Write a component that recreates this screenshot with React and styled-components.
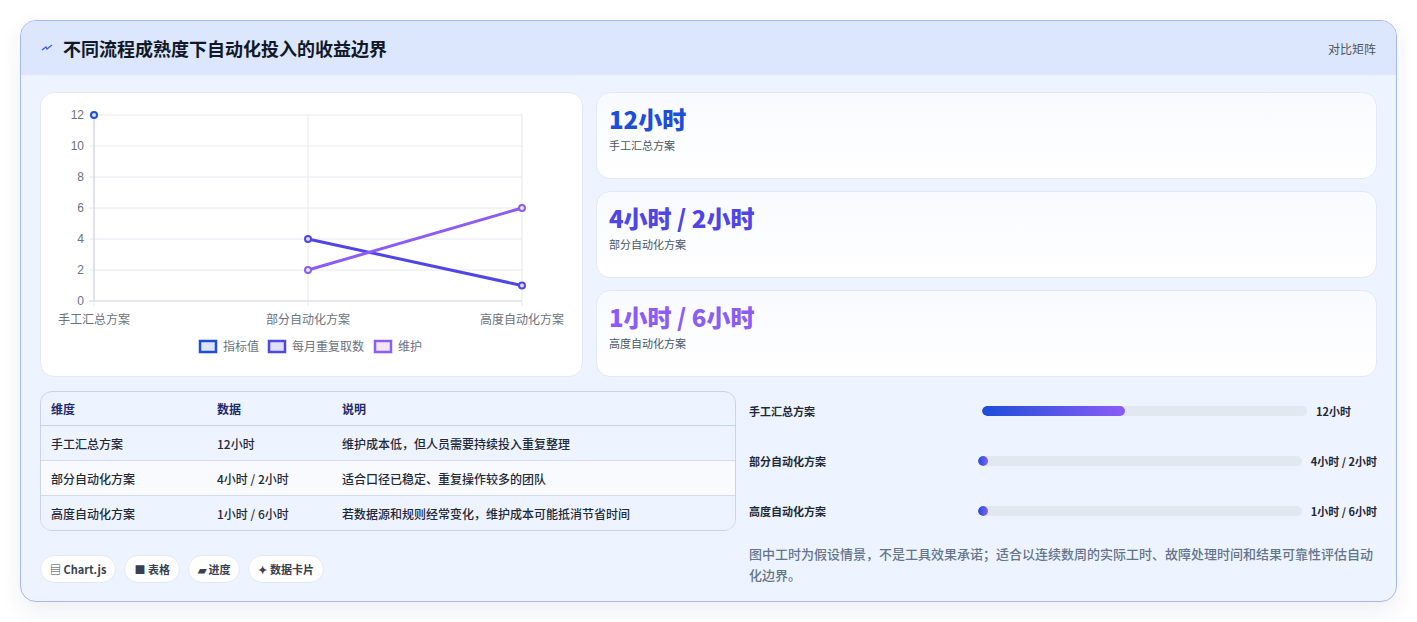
import React from 'react';
import styled, { createGlobalStyle } from 'styled-components';

const Global = createGlobalStyle`
  body { margin: 0; background: #fff; font-family: "Noto Sans CJK SC", "Noto Sans", sans-serif; }
`;

const Page = styled.div`
  padding: 20px;
  width: 1377px;
`;

const Card = styled.div`
  border: 1px solid #a9b8ea;
  border-radius: 16px;
  background: #eef4ff;
  overflow: hidden;
  box-shadow: 0 8px 22px rgba(30, 41, 99, 0.08);
`;

const Header = styled.div`
  height: 54px;
  background: #dce7fe;
  display: flex;
  align-items: center;
  justify-content: space-between;
  padding: 0 20px;
`;

const Title = styled.h2`
  margin: 0;
  font-size: 18px;
  font-weight: 700;
  color: #111827;
  display: flex;
  align-items: center;
  gap: 10px;
`;

const Tag = styled.span`
  font-size: 12px;
  color: #4b5563;
`;

const Body = styled.div`
  padding: 17px 19px 16px 19px;
  display: flex;
  flex-direction: column;
  gap: 14px;
`;

const TopRow = styled.div`
  display: grid;
  grid-template-columns: 543px 1fr;
  gap: 13px;
`;

const ChartBox = styled.div`
  background: #fff;
  border: 1px solid #e2e8f5;
  border-radius: 14px;
  height: 283px;
`;

const Stats = styled.div`
  display: flex;
  flex-direction: column;
  gap: 12px;
`;

const Stat = styled.div`
  height: 87px;
  box-sizing: border-box;
  border: 1px solid #e2e8f5;
  border-radius: 14px;
  background: linear-gradient(180deg, #f8faff 0%, #ffffff 100%);
  padding: 10px 12px;
`;

const StatValue = styled.div`
  font-size: 24px;
  font-weight: 800;
  color: ${p => p.$c};
  line-height: 32px;
`;

const StatLabel = styled.div`
  font-size: 11px;
  color: #4b5563;
  margin-top: 2px;
`;

const BottomRow = styled.div`
  display: grid;
  grid-template-columns: 696px 1fr;
  gap: 13px;
`;

const Left = styled.div`
  display: flex;
  flex-direction: column;
  gap: 24px;
`;

const Table = styled.table`
  width: 100%;
  border-collapse: separate;
  border-spacing: 0;
  border: 1px solid #c9d3ea;
  border-radius: 12px;
  overflow: hidden;
  font-size: 12px;
  background: #eef4ff;
`;

const Th = styled.th`
  text-align: left;
  font-weight: 700;
  color: #1e2a6b;
  height: 33px;
  padding: 0 10px;
  border-bottom: 1px solid #c9d3ea;
  width: ${p => p.$w || 'auto'};
`;

const Tr = styled.tr`
  background: ${p => (p.$alt ? '#f8fafd' : '#eef4ff')};
`;

const Td = styled.td`
  height: 34px;
  padding: 0 10px;
  color: #1f2937;
  font-weight: 500;
  border-bottom: ${p => (p.$last ? 'none' : '1px solid #d3dcef')};
`;

const Pills = styled.div`
  display: flex;
  gap: 8px;
`;

const Pill = styled.span`
  background: #fff;
  border: 1px solid #e2e8f5;
  border-radius: 14px;
  padding: 5px 9px;
  font-size: 11px;
  font-weight: 600;
  color: #374151;
  display: flex;
  align-items: center;
  gap: 4px;
`;

const Right = styled.div`
  display: flex;
  flex-direction: column;
  gap: 30px;
  padding-top: 10px;
`;

const BarRow = styled.div`
  display: grid;
  grid-template-columns: 220px 1fr auto;
  align-items: center;
  gap: 9px;
  height: 20px;
  font-size: 11px;
  font-weight: 700;
  color: #1f2937;
`;

const Track = styled.div`
  height: 10px;
  border-radius: 5px;
  background: #e2e8f0;
  overflow: hidden;
`;

const Fill = styled.div`
  height: 100%;
  border-radius: 5px;
  background: linear-gradient(90deg, #1d4ed8, #8b5cf6);
`;

const Note = styled.p`
  margin: -8px 0 0;
  font-size: 13px;
  line-height: 21px;
  color: #64748b;
  font-weight: 500;
`;

const Chart = () => {
  const x0 = 53, x1 = 267, x2 = 481, yb = 208, u = 15.5;
  const y = v => yb - v * u;
  const ticks = [0, 2, 4, 6, 8, 10, 12];
  return (
    <svg width="543" height="283" style={{ display: 'block' }}>
      {ticks.map(t => (
        <g key={t}>
          <line x1={x0 - 5} x2={x2} y1={y(t)} y2={y(t)} stroke={t === 0 ? '#cbd2e0' : '#e5e8ef'} />
          <text x={x0 - 10} y={y(t) + 4} fontSize="12" fill="#6b7280" textAnchor="end" fontFamily="Liberation Sans, sans-serif">{t}</text>
        </g>
      ))}
      {[x0, x1, x2].map(x => (
        <line key={x} x1={x} x2={x} y1={y(12)} y2={yb + 5} stroke="#e5e8ef" />
      ))}
      <line x1={x0} x2={x0} y1={y(12)} y2={yb} stroke="#cbd2e0" />
      {[['手工汇总方案', x0], ['部分自动化方案', x1], ['高度自动化方案', x2]].map(([l, x]) => (
        <text key={l} x={x} y={231} fontSize="12" fill="#6b7280" textAnchor="middle">{l}</text>
      ))}
      <polyline points={`${x1},${y(4)} ${x2},${y(1)}`} stroke="#4f46e5" strokeWidth="3" fill="none" />
      <polyline points={`${x1},${y(2)} ${x2},${y(6)}`} stroke="#8b5cf6" strokeWidth="3" fill="none" />
      <circle cx={x0} cy={y(12)} r="3" fill="#dbe4fb" stroke="#1d4ed8" strokeWidth="2" />
      <circle cx={x1} cy={y(4)} r="3" fill="#e0defb" stroke="#4f46e5" strokeWidth="2" />
      <circle cx={x2} cy={y(1)} r="3" fill="#e0defb" stroke="#4f46e5" strokeWidth="2" />
      <circle cx={x1} cy={y(2)} r="3" fill="#efe6fd" stroke="#8b5cf6" strokeWidth="2" />
      <circle cx={x2} cy={y(6)} r="3" fill="#efe6fd" stroke="#8b5cf6" strokeWidth="2" />
      {[['指标值', 159, '#1d4ed8', '#dbe4fb'], ['每月重复取数', 228, '#4f46e5', '#e0defb'], ['维护', 334, '#8b5cf6', '#efe6fd']].map(([l, x, c, f]) => (
        <g key={l}>
          <rect x={x} y={248} width="16" height="11" fill={f} stroke={c} strokeWidth="2.5" />
          <text x={x + 23} y={258} fontSize="12" fill="#6b7280">{l}</text>
        </g>
      ))}
    </svg>
  );
};

const rows = [
  ['手工汇总方案', '12小时', '维护成本低，但人员需要持续投入重复整理'],
  ['部分自动化方案', '4小时 / 2小时', '适合口径已稳定、重复操作较多的团队'],
  ['高度自动化方案', '1小时 / 6小时', '若数据源和规则经常变化，维护成本可能抵消节省时间'],
];

const bars = [
  ['手工汇总方案', '12小时', 44, 4, 26],
  ['部分自动化方案', '4小时 / 2小时', 3, 0, 0],
  ['高度自动化方案', '1小时 / 6小时', 3, 0, 0],
];

export default function App() {
  return (
    <>
      <Global />
      <Page>
        <Card>
          <Header>
            <Title>
              <svg width="12" height="12" viewBox="0 0 12 12">
                <path d="M1 8 L5 5 L6 7 L11 3" stroke="#3b5bdb" strokeWidth="1.3" fill="none" />
              </svg>
              不同流程成熟度下自动化投入的收益边界
            </Title>
            <Tag>对比矩阵</Tag>
          </Header>
          <Body>
            <TopRow>
              <ChartBox><Chart /></ChartBox>
              <Stats>
                <Stat><StatValue $c="#1d4ed8">12小时</StatValue><StatLabel>手工汇总方案</StatLabel></Stat>
                <Stat><StatValue $c="#4f46e5">4小时 / 2小时</StatValue><StatLabel>部分自动化方案</StatLabel></Stat>
                <Stat><StatValue $c="#8b5cf6">1小时 / 6小时</StatValue><StatLabel>高度自动化方案</StatLabel></Stat>
              </Stats>
            </TopRow>
            <BottomRow>
              <Left>
                <Table>
                  <thead>
                    <tr><Th $w="146px">维度</Th><Th $w="105px">数据</Th><Th>说明</Th></tr>
                  </thead>
                  <tbody>
                    {rows.map((r, i) => (
                      <Tr key={r[0]} $alt={i === 1}>
                        {r.map(c => <Td key={c} $last={i === 2}>{c}</Td>)}
                      </Tr>
                    ))}
                  </tbody>
                </Table>
                <Pills>
                  <Pill>▤ Chart.js</Pill>
                  <Pill>■ 表格</Pill>
                  <Pill>▰ 进度</Pill>
                  <Pill>✦ 数据卡片</Pill>
                </Pills>
              </Left>
              <Right>
                {bars.map(([l, v, w, ml, mr]) => (
                  <BarRow key={l}>
                    <span>{l}</span>
                    <Track style={{ marginLeft: ml }}>
                      <Fill style={{ width: `${w}%` }} />
                    </Track>
                    <span style={{ marginRight: mr }}>{v}</span>
                  </BarRow>
                ))}
                <Note>图中工时为假设情景，不是工具效果承诺；适合以连续数周的实际工时、故障处理时间和结果可靠性评估自动化边界。</Note>
              </Right>
            </BottomRow>
          </Body>
        </Card>
      </Page>
    </>
  );
}
